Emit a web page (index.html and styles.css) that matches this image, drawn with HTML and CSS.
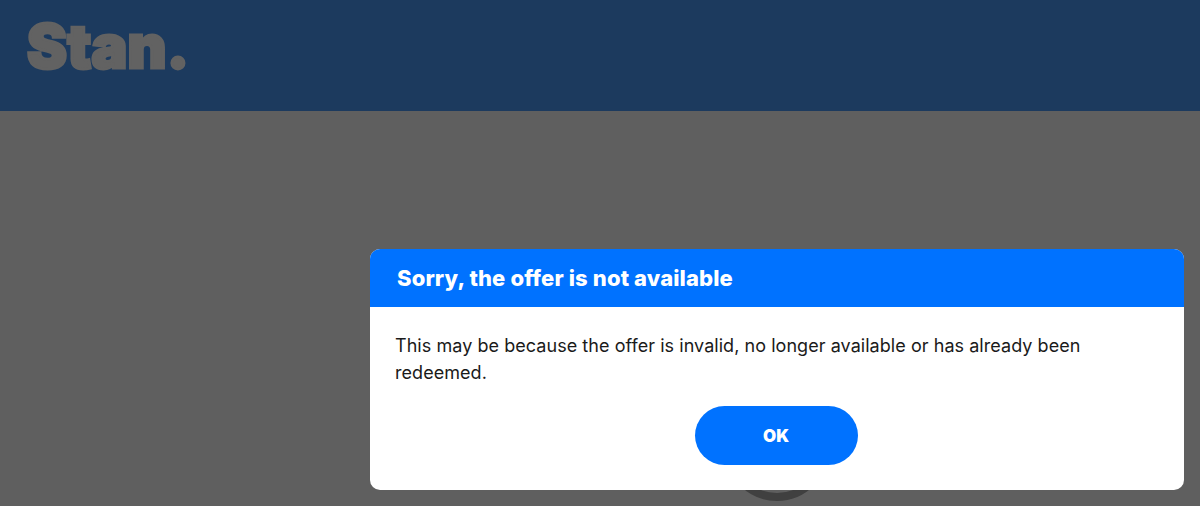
FILE: index.html
```html
<!DOCTYPE html>
<html lang="en">
<head>
  <meta charset="UTF-8">
  <title>Stan</title>
  <link rel="stylesheet" href="styles.css">
</head>
<body>
  <header class="site-header">
    <span class="logo">Stan.</span>
  </header>

  <main class="page-body">
    <div class="spinner"></div>
  </main>

  <div class="overlay">
    <div class="modal">
      <h2 class="modal-title">Sorry, the offer is not available</h2>
      <div class="modal-content">
        <p class="modal-text">This may be because the offer is invalid, no longer available or has already been redeemed.</p>
        <div class="modal-actions">
          <button class="btn-ok">OK</button>
        </div>
      </div>
    </div>
  </div>
</body>
</html>
```

FILE: styles.css
```css
html, body { margin: 0; height: 100%; overflow: hidden; }
body { font-family: "Inter", "Liberation Sans", sans-serif; background: #5f5f5f; }

.site-header { height: 111px; background: #1c3a5e; padding: 9px 0 0 27px; box-sizing: border-box; }
.logo { display: block; font-family: "Inter", sans-serif; font-weight: 900; font-size: 60px; line-height: 74px; letter-spacing: 0.2px; color: #626262; -webkit-text-stroke: 3px #626262; }

.page-body { position: relative; height: 395px; }
.spinner { position: absolute; left: 725px; top: 286px; width: 88px; height: 88px; border: 8px solid #404040; border-radius: 50%; }

.overlay { position: absolute; top: 249px; left: 370px; }
.modal { width: 814px; height: 241px; background: #fff; border-radius: 10px; overflow: hidden; }
.modal-title { margin: 0; height: 58px; padding: 0 27px; box-sizing: border-box; background: #0072ff; color: #fff; font-size: 22px; font-weight: 800; letter-spacing: 0.13px; line-height: 58px; }
.modal-content { padding: 25px 25px 0; }
.modal-text { margin: 0; font-size: 18px; letter-spacing: 0.05px; line-height: 27px; color: #1a1a1a; }
.modal-actions { display: flex; justify-content: center; margin-top: 20px; }
.btn-ok { width: 163px; height: 59px; margin-right: 2px; border: 0; border-radius: 30px; background: #0072ff; color: #fff; font-family: inherit; font-size: 17px; font-weight: 900; }
```
